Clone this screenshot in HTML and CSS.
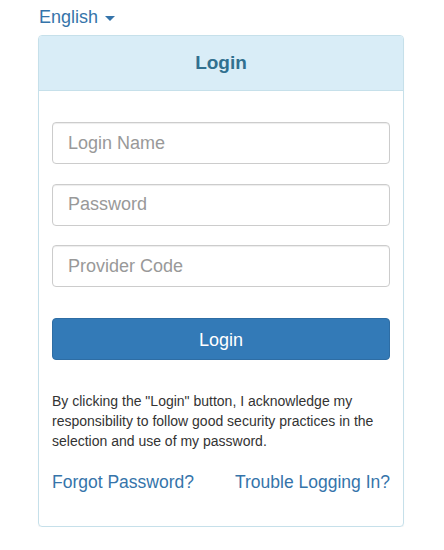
FILE: index.html
```html
<!DOCTYPE html>
<html lang="en">
<head>
    <meta charset="UTF-8">
    <meta name="viewport" content="width=device-width, initial-scale=1.0">
    <title>Login</title>
    <link rel="stylesheet" href="styles.css">
</head>
<body>
    <div class="wrapper">
        <div class="lang">
            <a href="#" class="lang-toggle">English <span class="caret"></span></a>
        </div>
        <div class="panel">
            <div class="panel-heading">
                <h3 class="panel-title">Login</h3>
            </div>
            <div class="panel-body">
                <form id="loginForm">
                    <div class="form-group">
                        <input type="text" class="form-control" placeholder="Login Name">
                    </div>
                    <div class="form-group">
                        <input type="password" class="form-control" placeholder="Password">
                    </div>
                    <div class="form-group last">
                        <input type="text" class="form-control" placeholder="Provider Code">
                    </div>
                    <button type="submit" class="btn">Login</button>
                </form>
                <p class="notice">By clicking the "Login" button, I acknowledge my responsibility to follow good security practices in the selection and use of my password.</p>
                <div class="links">
                    <a href="#">Forgot Password?</a>
                    <a href="#">Trouble Logging In?</a>
                </div>
            </div>
        </div>
    </div>
</body>
</html>
```

FILE: styles.css
```css
body {
    font-family: "Liberation Sans", Arial, sans-serif;
    background-color: #fff;
    margin: 0;
    padding: 0;
    color: #333;
}
a {
    color: #3574aa;
    text-decoration: none;
}
.wrapper {
    width: 366px;
    margin-left: 38px;
}
.lang {
    font-size: 18px;
    line-height: 26px;
    padding-top: 4px;
    height: 31px;
    padding-left: 1px;
}
.caret {
    display: inline-block;
    width: 0;
    height: 0;
    margin-left: 2px;
    vertical-align: middle;
    border-top: 5px solid #3574aa;
    border-left: 5px solid transparent;
    border-right: 5px solid transparent;
}
.panel {
    box-sizing: border-box;
    border: 1px solid #c6e0ea;
    border-radius: 4px;
    box-shadow: 0 1px 1px rgba(0, 0, 0, 0.05);
    height: 492px;
}
.panel-heading {
    background-color: #d9edf7;
    border-bottom: 1px solid #c6e0ea;
    border-radius: 3px 3px 0 0;
    padding: 16px 15px;
    text-align: center;
}
.panel-title {
    margin: 0;
    font-size: 19px;
    line-height: 22px;
    font-weight: bold;
    color: #31708f;
}
.panel-body {
    padding: 31px 13px 0 13px;
}
.form-group {
    margin-bottom: 19.5px;
}
.form-group.last {
    margin-bottom: 31px;
}
.form-control {
    display: block;
    width: 100%;
    box-sizing: border-box;
    height: 42px;
    padding: 0 15px;
    font-family: inherit;
    font-size: 18px;
    color: #555;
    border: 1px solid #ccc;
    border-radius: 4px;
    box-shadow: inset 0 1px 1px rgba(0, 0, 0, 0.075);
}
.form-control::placeholder {
    color: #999;
}
.btn {
    display: block;
    box-sizing: border-box;
    width: 100%;
    height: 42px;
    padding-top: 3px;
    background-color: #337ab7;
    border: 1px solid #2e6da4;
    border-radius: 4px;
    color: #fff;
    font-family: inherit;
    font-size: 18px;
    cursor: pointer;
}
.notice {
    margin: 31px 0 0 0;
    font-size: 14px;
    line-height: 20px;
}
.links {
    display: flex;
    justify-content: space-between;
    margin-top: 19px;
    font-size: 17.5px;
    line-height: 24px;
}
```
